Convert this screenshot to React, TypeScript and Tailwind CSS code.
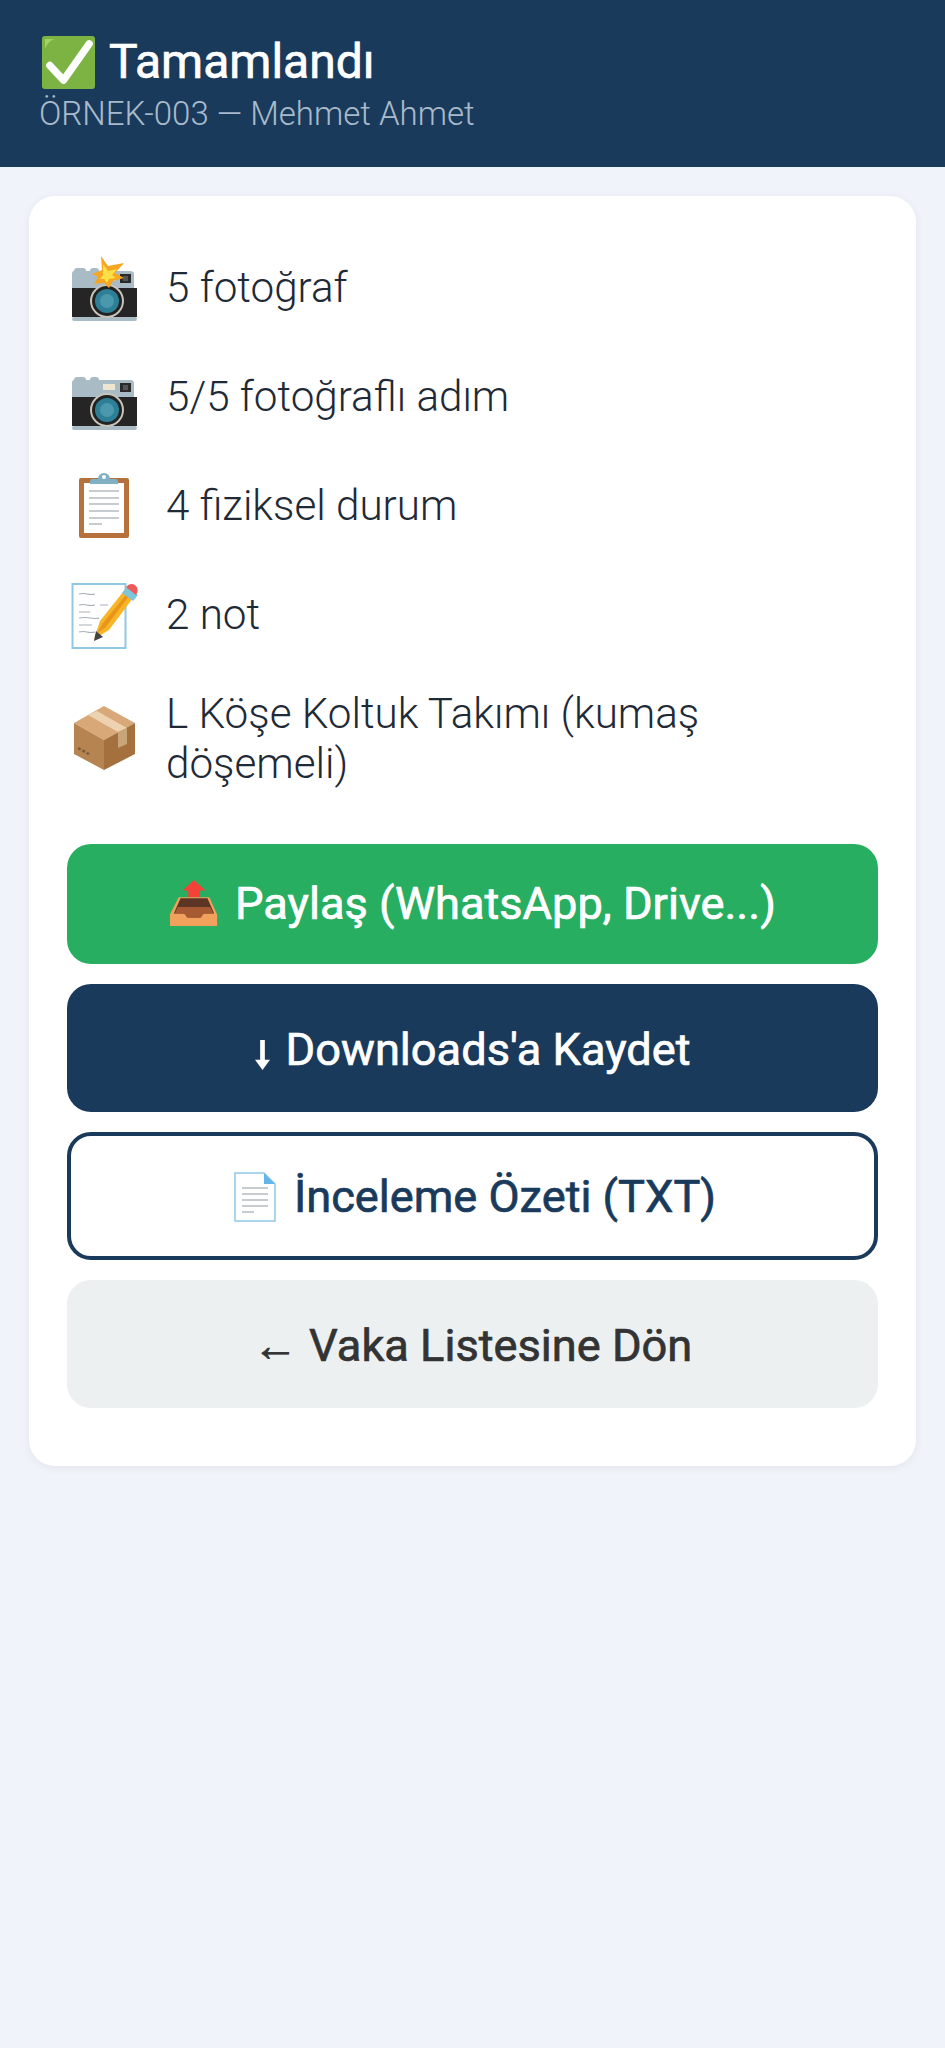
function CheckEmoji() {
	return (
		<svg viewBox="0 0 56 56" className="ml-[2px] h-[55px] w-[55px] shrink-0">
			<rect x="1" y="1" width="54" height="54" rx="3" fill="#7cb342" />
			<path d="M4 4 H14 Q7 6 4 14 Z" fill="#a5d16a" />
			<path d="M9 31 L23 46 L49 9" fill="none" stroke="#fff" strokeWidth="7.5" strokeLinecap="round" strokeLinejoin="round" />
		</svg>
	);
}

function CameraEmoji({ flash }: { flash?: boolean }) {
	return (
		<svg viewBox="0 -4 68 68" className="h-[68px] w-[68px] shrink-0 overflow-visible">
			<path d="M4 13 q0-3 3-3 h6 q3 0 3 3 h4 q0-3 3-3 h3 q3 0 3 3 h31 q4 0 4 3 v14 H2 V16 q0-3 2-3z" fill="#a9bcc6" />
			<rect x="2" y="30" width="65" height="29" fill="#252525" />
			<rect x="2" y="59" width="65" height="4" rx="2" fill="#a9bcc6" />
			<rect x="33" y="17" width="12" height="6" fill="#efe6d0" />
			<rect x="50" y="16" width="11" height="9" fill="#2a2a2a" />
			<rect x="53" y="18" width="5" height="5" fill="#555" />
			<circle cx="37" cy="43" r="17" fill="#c8c4bc" />
			<circle cx="37" cy="43" r="15" fill="#222" />
			<circle cx="37" cy="43" r="12" fill="#2d7f97" />
			<circle cx="37" cy="43" r="7" fill="#4b98ad" />
			{flash && (
				<>
					<path d="M31 -2 L38 8 L54 5 L45 15 L54 20 L43 23 L39 30 L34 25 L24 26 L28 19 L22 16 L32 12 Z" fill="#f6a623" />
					<path d="M33 6 L38 13 L47 11 L42 17 L46 20 L39 21 L37 25 L34 21 L30 21 L33 17 Z" fill="#fbe04a" />
				</>
			)}
		</svg>
	);
}

function ClipboardEmoji() {
	return (
		<svg viewBox="0 0 68 68" className="h-[68px] w-[68px] shrink-0">
			<rect x="9" y="6" width="50" height="60" rx="2" fill="#b5723d" />
			<rect x="14" y="11" width="40" height="50" fill="#fff" />
			<path d="M28 7 a6 6 0 0 1 12 0 h6 q2 0 2 3 v2 H20 v-2 q0-3 2-3z" fill="#7fb0c4" />
			<circle cx="34" cy="5" r="2" fill="#fff" />
			<g stroke="#b4bcc0" strokeWidth="1.5">
				<path d="M19 19 H49 M19 26 H49 M19 32 H49 M19 39 H49 M19 46 H49 M19 52 H32" />
			</g>
		</svg>
	);
}

function MemoEmoji() {
	return (
		<svg viewBox="0 0 68 68" className="h-[68px] w-[68px] shrink-0">
			<rect x="2.5" y="3" width="53" height="64" fill="#fff" stroke="#90c8e6" strokeWidth="2" />
			<g stroke="#a8b0b4" strokeWidth="1.2" fill="none">
				<path d="M9 13 q4-1 8 0 t8 0 M9 24 q4-1 8 0 t8 0 M9 31 H20 M30 24 H38 M9 37 q6-1 12 0 t8 0 M9 44 H22 M9 51 q4-1 8 0 t8 0" />
			</g>
			<path d="M24 58 L30 40 L57 6 L66 13 L39 49 Z" fill="#f8b626" />
			<path d="M27 52 L33 42 L60 9 L62 11 L35 47 Z" fill="#e9941b" />
			<path d="M24 60 L26 50 L33 56 Z" fill="#444" />
			<path d="M52 12 L57 6 L68 14 L63 20 Z" fill="#7fc4d8" />
			<path d="M56 6 Q60 1 65 4 Q70 8 66 14 Z" fill="#ee5a5a" />
		</svg>
	);
}

function BoxEmoji() {
	return (
		<svg viewBox="0 1 68 68" className="h-[68px] w-[68px] shrink-0">
			<path d="M34 2 L65 19 L34 36 L4 19 Z" fill="#d9a878" />
			<path d="M4 19 L34 36 V66 L4 50 Z" fill="#b58450" />
			<path d="M65 19 L34 36 V66 L65 50 Z" fill="#a4703e" />
			<path d="M18 11 L48 28 L57 24 L27 7 Z" fill="#ecd2ae" />
			<path d="M48 28 L57 24 V40 L48 44 Z" fill="#c9a478" />
			<path d="M8 44 L19 50" stroke="#7b5a38" strokeWidth="2.5" strokeDasharray="3 2" />
		</svg>
	);
}

function OutboxEmoji() {
	return (
		<svg viewBox="0 0 52 52" className="h-[50px] w-[50px] shrink-0">
			<path d="M26 1 L38 12 H32 V19 H20 V12 H14 Z" fill="#f44336" />
			<path d="M10 19 H42 L50 37 V49 H1 V37 Z" fill="#f2a15c" />
			<path d="M12 20 H40 L47 36 H36 L33 40 H19 L16 36 H5 Z" fill="#5d3524" />
			<path d="M9 29 H43 L46 36 H36 L33 40 H19 L16 36 H6 Z" fill="#a65a32" />
		</svg>
	);
}

function PageEmoji() {
	return (
		<svg viewBox="0 0 42 50" className="ml-[5px] h-[50px] w-[42px] shrink-0">
			<path d="M1 1 H30 L41 12 V49 H1 Z" fill="#fff" stroke="#90c8e6" strokeWidth="1.5" />
			<path d="M30 1 L41 12 H30 Z" fill="#64b5e8" />
			<g stroke="#b4bcc0" strokeWidth="1.6">
				<path d="M8 16 H34 M8 22 H34 M8 28 H34 M8 34 H34 M8 40 H20" />
			</g>
		</svg>
	);
}

function DownArrow() {
	return (
		<svg viewBox="0 0 16 32" className="mt-[10px] h-[32px] w-[15px] shrink-0">
			<path d="M5.5 0 H10.5 V21 H16 L8 32 L0 21 H5.5 Z" fill="#fff" />
		</svg>
	);
}

const rows = [
	{ icon: <CameraEmoji flash />, text: "5 fotoğraf" },
	{ icon: <CameraEmoji />, text: "5/5 fotoğraflı adım" },
	{ icon: <ClipboardEmoji />, text: "4 fiziksel durum" },
	{ icon: <MemoEmoji />, text: "2 not" },
	{ icon: <BoxEmoji />, text: "L Köşe Koltuk Takımı (kumaş döşemeli)" },
];

export default function App() {
	return (
		<div className="min-h-[2048px] bg-[#f0f4fa] font-['Roboto',sans-serif]">
			{/* Header */}
			<header className="h-[167px] bg-[#1a3a5c] pl-[39px] pt-[33px]">
				<h1 className="flex h-[58px] items-center gap-[13px] text-[48px] font-normal leading-[58px] text-white [-webkit-text-stroke:0.7px_currentColor]">
					<CheckEmoji />
					Tamamlandı
				</h1>
				<p className="mt-[1px] text-[33px] font-light leading-[44px] text-[#a9bacb]">ÖRNEK-003 — Mehmet Ahmet</p>
			</header>

			{/* Result card */}
			<main className="mx-[29px] mt-[29px] rounded-[26px] bg-white px-[38px] pb-[58px] pt-[52px] shadow-[0_2px_10px_rgba(0,0,0,0.06)]">
				<ul className="flex flex-col gap-[30px]">
					{rows.map((row) => (
						<li key={row.text} className="flex min-h-[79px] items-center gap-[28px] pl-[3px] text-[42.2px] font-light leading-[50px] text-[#1f2a37] last:min-h-[109px]">
							{row.icon}
							<span className="max-w-[600px]">{row.text}</span>
						</li>
					))}
				</ul>

				<div className="mt-[51px] flex flex-col gap-[20px]">
					<button className="flex h-[120px] items-center justify-center gap-[16px] rounded-[24px] bg-[#27ae60] text-[45.2px] font-normal text-white [-webkit-text-stroke:0.7px_currentColor]">
						<OutboxEmoji />
						Paylaş (WhatsApp, Drive...)
					</button>
					<button className="flex h-[128px] items-center justify-center gap-[16px] rounded-[24px] bg-[#1a3a5c] pt-[3px] text-[45.2px] font-normal text-white [-webkit-text-stroke:0.7px_currentColor]">
						<DownArrow />
						Downloads'a Kaydet
					</button>
					<button className="flex h-[128px] items-center justify-center gap-[18px] rounded-[24px] border-[4px] border-[#1a3a5c] bg-white pt-[2px] text-[45.2px] font-normal text-[#1a3a5c] [-webkit-text-stroke:0.7px_currentColor]">
						<PageEmoji />
						İnceleme Özeti (TXT)
					</button>
					<button className="flex h-[128px] items-center justify-center rounded-[24px] bg-[#ecf0f1] pt-[3px] text-[45.2px] font-normal text-[#333] [-webkit-text-stroke:0.7px_currentColor]">
						← Vaka Listesine Dön
					</button>
				</div>
			</main>
		</div>
	);
}
